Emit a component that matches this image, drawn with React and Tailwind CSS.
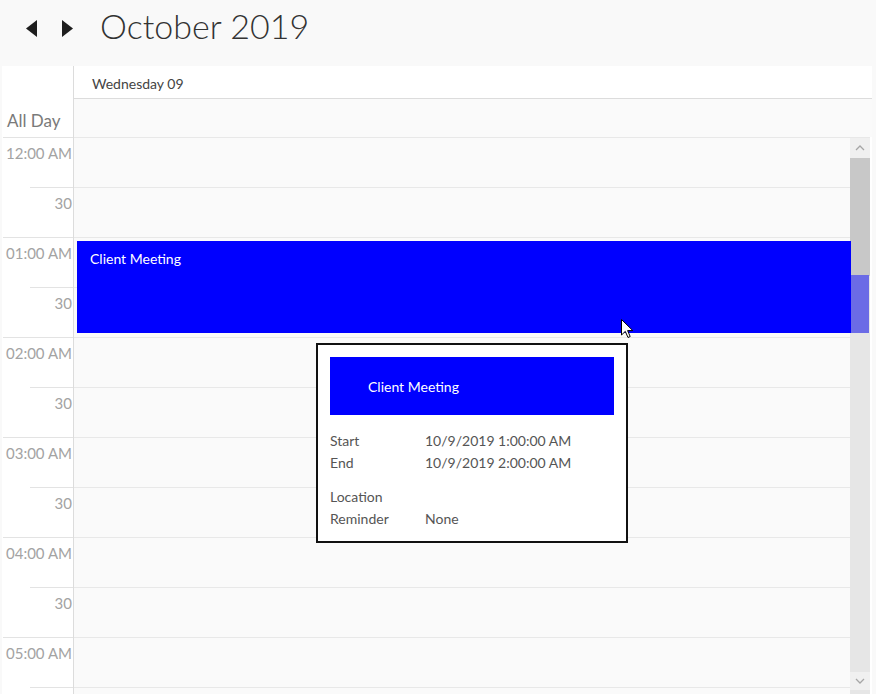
import React from 'react';

const font = { fontFamily: '"Segoe UI", Lato, "Open Sans", sans-serif' };

const slots = [
  { label: '12:00 AM', hour: true },
  { label: '30' },
  { label: '01:00 AM', hour: true },
  { label: '30' },
  { label: '02:00 AM', hour: true },
  { label: '30' },
  { label: '03:00 AM', hour: true },
  { label: '30' },
  { label: '04:00 AM', hour: true },
  { label: '30' },
  { label: '05:00 AM', hour: true },
  { label: '' },
];

function Chevron({ down }) {
  return (
    <svg width="10" height="6" viewBox="0 0 10 6" className={down ? 'rotate-180' : ''}>
      <path d="M1 5 L5 1 L9 5" fill="none" stroke="#a6a6a6" strokeWidth="1.3" />
    </svg>
  );
}

function Cursor() {
  return (
    <svg width="13" height="20" viewBox="0 0 13 20">
      <path d="M0.5 0.5 L0.5 16 L4.3 12.4 L7 18.5 L9.2 17.5 L6.6 11.6 L11.8 11.6 Z" fill="#fff" stroke="#000" strokeWidth="1" />
    </svg>
  );
}

export default function App() {
  return (
    <div className="w-[876px] h-[694px] bg-[#f9f9f9] overflow-hidden flex flex-col" style={font}>
      {/* month header */}
      <div className="h-[66px] flex items-center shrink-0 pb-[10px]">
        <div className="flex items-center gap-[25px] pl-[26px]">
          <svg width="11" height="17" viewBox="0 0 11 17"><path d="M11 0 L0 8.5 L11 17 Z" fill="#1e1e1e" /></svg>
          <svg width="11" height="17" viewBox="0 0 11 17"><path d="M0 0 L11 8.5 L0 17 Z" fill="#1e1e1e" /></svg>
        </div>
        <div className="ml-[27px] text-[34px] font-light text-[#333] leading-none pb-[4px]">October 2019</div>
      </div>

      {/* grid */}
      <div className="ml-[2px] mr-[4px] flex-1 flex flex-col bg-white">
        <div className="flex h-[33px] shrink-0">
          <div className="w-[72px] border-r border-[#dcdcdc]" />
          <div className="flex-1 border-b border-[#dcdcdc] pl-[18px] pt-[7px] text-[14px] text-[#444]">Wednesday 09</div>
        </div>
        <div className="flex h-[38px] shrink-0">
          <div className="w-[72px] border-r border-[#dcdcdc] flex items-end pl-[5px] pb-[8px] text-[17px] text-[#7a7a7a] leading-none">All Day</div>
          <div className="flex-1 bg-[#fafafa]" />
        </div>

        <div className="relative flex h-[557px] shrink-0 overflow-hidden">
          {/* time column */}
          <div className="w-[72px] border-r border-[#dcdcdc] flex flex-col">
            {slots.map((s, i) => (
              <div key={i} className="h-[50px] shrink-0 flex flex-col">
                <div className={s.hour ? 'ml-[1px] border-t border-[#e3e3e3]' : 'ml-[28px] border-t border-[#e3e3e3]'} />
                <div className="flex justify-end pr-[1px] pt-[4px] text-[15px] leading-[22px] text-[#a3a3a3] whitespace-nowrap">{s.label}</div>
              </div>
            ))}
          </div>

          {/* day column */}
          <div className="flex-1 bg-[#fafafa] flex flex-col">
            {slots.map((s, i) => (
              <div key={i} className="h-[50px] shrink-0 border-t border-[#e8e8e8]" />
            ))}
          </div>

          {/* scrollbar */}
          <div className="w-[20px] mr-[2px] shrink-0 bg-[#e6e6e6] border-t border-[#e8e8e8] flex flex-col">
            <div className="h-[20px] flex items-center justify-center bg-[#f0f0f0]"><Chevron /></div>
            <div className="h-[118px] bg-[#c8c8c8]" />
            <div className="flex-1" />
            <div className="h-[18px] flex items-center justify-center bg-[#f0f0f0] mb-[4px]"><Chevron down /></div>
          </div>

          {/* event */}
          <div className="absolute left-[75px] top-[104px] w-[792px] h-[92px] flex">
            <div className="flex-1 bg-[#0000ff] text-white text-[14px] pl-[13px] pt-[8px] leading-[20px]">Client Meeting</div>
            <div className="w-[18px] mt-[34px] bg-[#6b6be6]" />
          </div>

          {/* tooltip */}
          <div className="absolute left-[314px] top-[206px] w-[312px] h-[200px] border-2 border-[#111] bg-white px-[12px] pt-[12px]">
            <div className="h-[58px] bg-[#0000ff] text-white text-[14px] flex items-center pl-[38px]">Client Meeting</div>
            <div className="mt-[15px] text-[14px] text-[#555] leading-[22px]">
              <div className="flex"><span className="w-[95px]">Start</span><span>10/9/2019 1:00:00 AM</span></div>
              <div className="flex"><span className="w-[95px]">End</span><span>10/9/2019 2:00:00 AM</span></div>
              <div className="flex mt-[12px]"><span className="w-[95px]">Location</span><span></span></div>
              <div className="flex"><span className="w-[95px]">Reminder</span><span>None</span></div>
            </div>
          </div>

          {/* mouse pointer */}
          <div className="absolute left-[619px] top-[182px]"><Cursor /></div>
        </div>
      </div>
    </div>
  );
}
